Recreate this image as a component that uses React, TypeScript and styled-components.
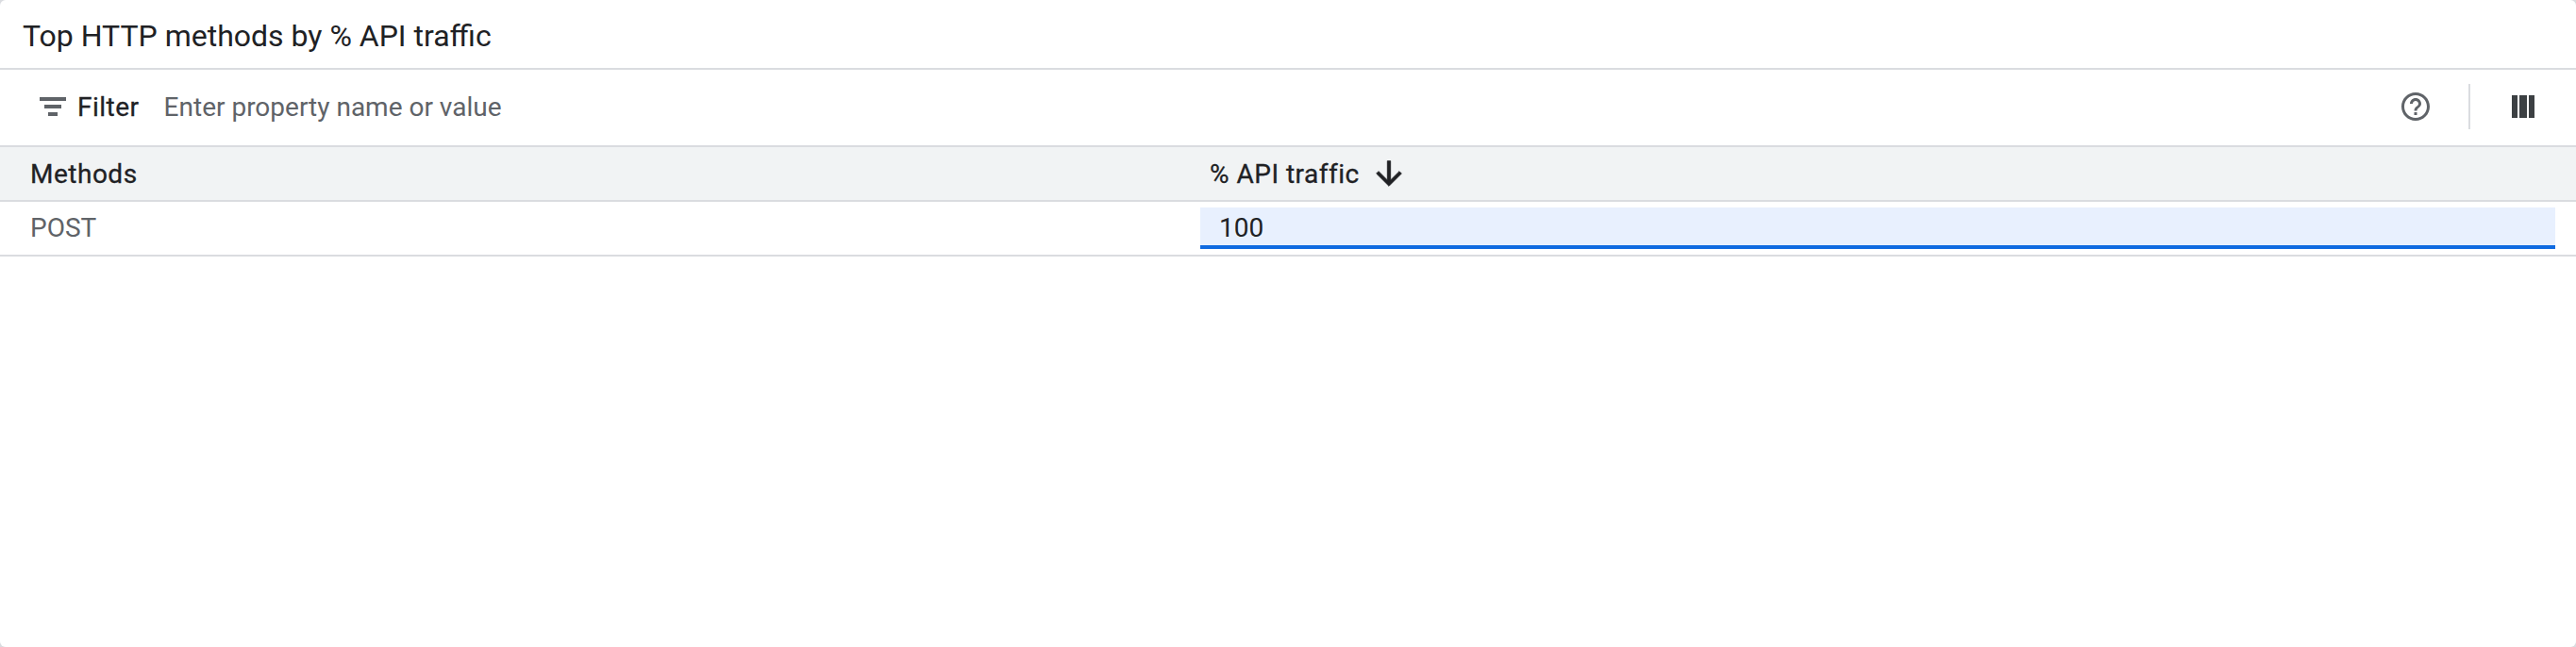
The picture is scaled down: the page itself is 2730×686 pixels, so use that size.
import styled, {createGlobalStyle} from "styled-components";

const GlobalStyle = createGlobalStyle`
  html, body {
    margin: 0;
    padding: 0;
    background: #dadce0;
  }
  * {
    box-sizing: border-box;
  }
`;

const Card = styled.div`
  width: 2730px;
  height: 686px;
  background: #fff;
  border-radius: 6px;
  overflow: hidden;
  font-family: Roboto, "Liberation Sans", sans-serif;
  color: #202124;
`;

const Title = styled.h2`
  margin: 0;
  height: 74px;
  padding: 4px 24px 0;
  display: flex;
  align-items: center;
  font-size: 32px;
  font-weight: 400;
  border-bottom: 2px solid #dadce0;
`;

const Toolbar = styled.div`
  height: 82px;
  display: flex;
  align-items: center;
  padding-left: 42px;
  padding-bottom: 2px;
  border-bottom: 2px solid #dadce0;
`;

const FilterIcon = styled.svg`
  width: 28px;
  height: 20px;
  fill: #5f6368;
`;

const FilterLabel = styled.span`
  margin-left: 12px;
  font-size: 28px;
  font-weight: 400;
  letter-spacing: 0.5px;
  -webkit-text-stroke: 0.3px #202124;
`;

const Placeholder = styled.span`
  margin-left: 26px;
  flex: 1;
  font-size: 28px;
  color: #5f6368;
`;

const ToolIcons = styled.div`
  display: flex;
  align-items: center;
  height: 100%;
  padding-right: 44px;
`;

const HelpIcon = styled.svg`
  width: 36px;
  height: 36px;
  fill: #5f6368;
`;

const Divider = styled.div`
  width: 2px;
  height: 48px;
  margin: 0 44px 0 38px;
  background: #dadce0;
`;

const ColumnsIcon = styled.svg`
  width: 24px;
  height: 24px;
  fill: #3c4043;
`;

const HeaderRow = styled.div`
  display: grid;
  grid-template-columns: 1272px 1fr;
  height: 58px;
  align-items: center;
  background: #f1f3f4;
  border-bottom: 2px solid #dadce0;
`;

const HeaderCell = styled.div`
  display: flex;
  align-items: center;
  padding-left: ${props => props.$first ? "32px" : "10px"};
  font-size: 28px;
  font-weight: 400;
  letter-spacing: 0.5px;
  -webkit-text-stroke: 0.3px #202124;
`;

const SortIcon = styled.svg`
  margin-left: 11px;
  width: 40px;
  height: 40px;
  fill: #202124;
  stroke: #202124;
  stroke-width: 0.5;
`;

const Row = styled.div`
  display: grid;
  grid-template-columns: 1272px 1436px;
  height: 58px;
  border-bottom: 2px solid #dadce0;
`;

const NameCell = styled.div`
  display: flex;
  align-items: center;
  padding: 0 0 2px 32px;
  font-size: 28px;
  color: #5f6368;
`;

const ValueCell = styled.div`
  margin-top: 6px;
  height: 44px;
  display: flex;
  align-items: center;
  padding: 2px 0 0 20px;
  font-size: 28px;
  background: #e8f0fe;
  border-bottom: 4px solid #0f6ae0;
`;

function App() {
    return (
        <Card>
            <GlobalStyle/>
            <Title>Top HTTP methods by % API traffic</Title>
            <Toolbar>
                <FilterIcon viewBox="0 0 28 20">
                    <path d="M0 0h28v4H0zM5 8h18v4H5zM9 16h10v4H9z"/>
                </FilterIcon>
                <FilterLabel>Filter</FilterLabel>
                <Placeholder>Enter property name or value</Placeholder>
                <ToolIcons>
                    <HelpIcon viewBox="0 0 24 24">
                        <path d="M11 18h2v-2h-2v2zm1-16C6.48 2 2 6.48 2 12s4.48 10 10 10 10-4.48 10-10S17.52 2 12 2zm0 18c-4.41 0-8-3.59-8-8s3.59-8 8-8 8 3.59 8 8-3.59 8-8 8zm0-14c-2.21 0-4 1.79-4 4h2c0-1.1.9-2 2-2s2 .9 2 2c0 2-3 1.75-3 5h2c0-2.25 3-2.5 3-5 0-2.21-1.79-4-4-4z"/>
                    </HelpIcon>
                    <Divider/>
                    <ColumnsIcon viewBox="0 0 24 24">
                        <path d="M0 0h6v24H0zM8 0h8v24H8zM18 0h6v24h-6z"/>
                    </ColumnsIcon>
                </ToolIcons>
            </Toolbar>
            <HeaderRow>
                <HeaderCell $first>Methods</HeaderCell>
                <HeaderCell>
                    % API traffic
                    <SortIcon viewBox="0 0 24 24">
                        <path d="M20 12l-1.41-1.41L13 16.17V4h-2v12.17l-5.58-5.59L4 12l8 8 8-8z"/>
                    </SortIcon>
                </HeaderCell>
            </HeaderRow>
            <Row>
                <NameCell>POST</NameCell>
                <ValueCell>100</ValueCell>
            </Row>
        </Card>
    );
}

export default App;
